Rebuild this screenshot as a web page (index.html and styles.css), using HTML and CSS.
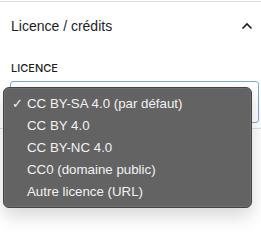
FILE: index.html
```html
<!DOCTYPE html>
<html>
<head>
  <title>Licence</title>
  <link rel="stylesheet" href="styles.css">
</head>
<body>
  <div class="panel">
    <div class="panel-head">
      <span class="panel-title">Licence / crédits</span>
      <svg class="chevron" width="12" height="8" viewBox="0 0 12 8">
        <path d="M1.5 6.5 L6 2 L10.5 6.5" fill="none" stroke="#1e1e1e" stroke-width="1.6"/>
      </svg>
    </div>
    <div class="panel-body">
      <div class="field-label">Licence</div>
      <div class="select-box"></div>
    </div>
  </div>
  <div class="separator"></div>

  <ul class="menu">
    <li class="menu-item checked"><span class="check">✓</span>CC BY-SA 4.0 (par défaut)</li>
    <li class="menu-item">CC BY 4.0</li>
    <li class="menu-item">CC BY-NC 4.0</li>
    <li class="menu-item">CC0 (domaine public)</li>
    <li class="menu-item">Autre licence (URL)</li>
  </ul>
</body>
</html>
```

FILE: styles.css
```css
body {
  margin: 0;
  padding: 1px 0 0 0;
  background: #fff;
  font-family: "Liberation Sans", Arial, sans-serif;
  color: #1e1e1e;
  position: relative;
  width: 261px;
  height: 245px;
  overflow: hidden;
}

.panel {
  border-top: 1px solid #dcdcdc;
}

.panel-head {
  display: flex;
  align-items: center;
  justify-content: space-between;
  height: 47px;
  padding: 0 8px 0 11px;
}

.panel-title {
  font-size: 14px;
}

.panel-body {
  padding: 12px 2px 0 10px;
}

.field-label {
  font-family: Inter, "Liberation Sans", sans-serif;
  font-size: 11px;
  font-weight: 500;
  text-transform: uppercase;
  padding-left: 1px;
  height: 14px;
  line-height: 14px;
}

.select-box {
  margin-top: 6px;
  height: 40px;
  border: 1px solid #7ea9d9;
  border-radius: 3px;
  background: #fff;
}

.separator {
  margin-top: 5px;
  border-top: 1px solid #e0e0e0;
}

.menu {
  position: absolute;
  left: 3px;
  top: 87px;
  width: 247px;
  margin: 0;
  padding: 5px 0 4px 0;
  list-style: none;
  background: #636363;
  border: 1px solid #454545;
  border-radius: 6px;
  box-shadow: 0 8px 18px rgba(0, 0, 0, 0.16), inset 0 0 0 1px rgba(255, 255, 255, 0.08);
}

.menu-item {
  position: relative;
  height: 22px;
  line-height: 22px;
  padding-left: 23px;
  font-size: 13.3px;
  color: #f2f2f2;
}

.check {
  position: absolute;
  left: 8px;
  font-size: 13px;
}
```
